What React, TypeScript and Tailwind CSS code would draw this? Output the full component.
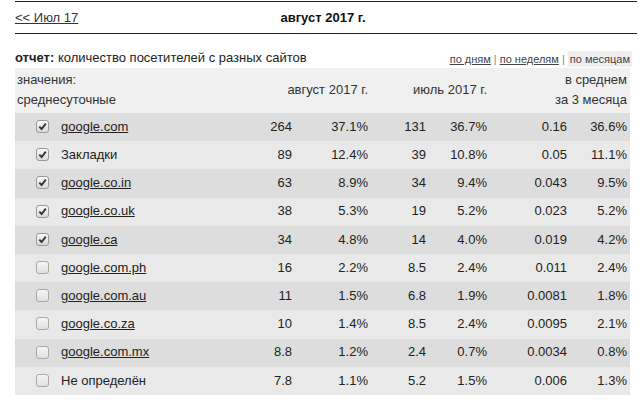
type Row = {
  checked: boolean;
  name: string;
  link: boolean;
  vals: string[];
};

const rows: Row[] = [
  { checked: true, name: "google.com", link: true, vals: ["264", "37.1%", "131", "36.7%", "0.16", "36.6%"] },
  { checked: true, name: "Закладки", link: false, vals: ["89", "12.4%", "39", "10.8%", "0.05", "11.1%"] },
  { checked: true, name: "google.co.in", link: true, vals: ["63", "8.9%", "34", "9.4%", "0.043", "9.5%"] },
  { checked: true, name: "google.co.uk", link: true, vals: ["38", "5.3%", "19", "5.2%", "0.023", "5.2%"] },
  { checked: true, name: "google.ca", link: true, vals: ["34", "4.8%", "14", "4.0%", "0.019", "4.2%"] },
  { checked: false, name: "google.com.ph", link: true, vals: ["16", "2.2%", "8.5", "2.4%", "0.011", "2.4%"] },
  { checked: false, name: "google.com.au", link: true, vals: ["11", "1.5%", "6.8", "1.9%", "0.0081", "1.8%"] },
  { checked: false, name: "google.co.za", link: true, vals: ["10", "1.4%", "8.5", "2.4%", "0.0095", "2.1%"] },
  { checked: false, name: "google.com.mx", link: true, vals: ["8.8", "1.2%", "2.4", "0.7%", "0.0034", "0.8%"] },
  { checked: false, name: "Не определён", link: false, vals: ["7.8", "1.1%", "5.2", "1.5%", "0.006", "1.3%"] },
];

const cols = "grid grid-cols-[46px_171px_60px_76px_58px_61px_80px_60px] pr-[3px]";

function Box({ checked }: { checked: boolean }) {
  return (
    <div
      className={
        "ml-[21px] w-[13px] h-[13px] rounded-[3px] border flex items-center justify-center " +
        (checked
          ? "border-[#9a9a9a] bg-gradient-to-b from-[#fafafa] to-[#d8d8d8]"
          : "border-[#a8a8a8] bg-gradient-to-b from-[#f6f6f6] to-[#e0e0e0]")
      }
    >
      {checked && (
        <svg width="9" height="9" viewBox="0 0 9 9">
          <path d="M1.3 4.6 L3.6 7 L7.8 1.6" fill="none" stroke="#333" strokeWidth="1.9" />
        </svg>
      )}
    </div>
  );
}

export default function App() {
  return (
    <div className="w-[640px] h-[400px] overflow-hidden bg-white text-[13px] text-[#222] font-['Liberation_Sans',Arial,sans-serif]">
      <div className="ml-[15px] mr-[3px] mt-[1px] border-t-[1.5px] border-b-[1.5px] border-[#222] h-[33px] grid grid-cols-3 items-center">
        <a className="underline text-[#333]">&lt;&lt; Июл 17</a>
        <div className="font-bold text-center text-[#111] -ml-[6px]">август 2017 г.</div>
        <div />
      </div>

      <div className="ml-[15px] mr-[8px] mt-[14px] flex items-end justify-between h-[19px]">
        <div>
          <span className="font-bold">отчет:</span> количество посетителей с разных сайтов
        </div>
        <div className="text-[11px] text-[#444] flex items-center">
          <a className="underline">по дням</a>
          <span className="text-[#888] px-[3px]">|</span>
          <a className="underline">по неделям</a>
          <span className="text-[#888] px-[3px]">|</span>
          <span className="bg-[#eee] px-[2px]">по месяцам</span>
        </div>
      </div>

      <div className="ml-[15px] w-[615px] mt-[1px]">
        <div className={cols + " bg-[#f0f0f0] h-[45px] items-center text-[#333] leading-[20px] pb-[2px]"}>
          <div className="col-span-2 pl-[2px]">
            <div>значения:</div>
            <div>среднесуточные</div>
          </div>
          <div className="col-span-2 text-right">август 2017 г.</div>
          <div className="col-span-2 text-right">июль 2017 г.</div>
          <div className="col-span-2 text-right">
            <div>в среднем</div>
            <div>за 3 месяца</div>
          </div>
        </div>
        {rows.map((r, i) => (
          <div
            key={r.name}
            className={cols + " h-[28.2px] items-center pb-[1px] " + (i % 2 === 0 ? "bg-[#dddddd]" : "bg-[#e9e9e9]")}
          >
            <Box checked={r.checked} />
            <div className={r.link ? "underline" : ""}>{r.name}</div>
            {r.vals.map((v, j) => (
              <div key={j} className="text-right">
                {v}
              </div>
            ))}
          </div>
        ))}
      </div>
    </div>
  );
}
